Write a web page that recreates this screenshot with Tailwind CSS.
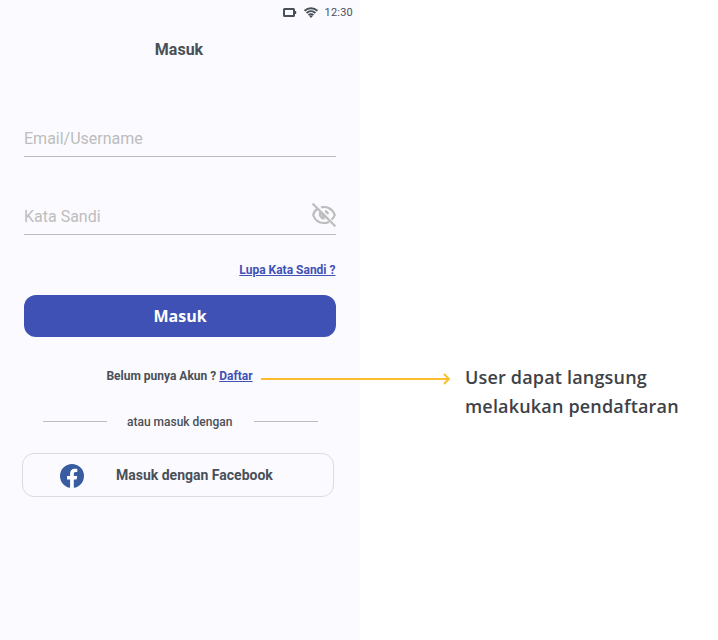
<!DOCTYPE html>
<html lang="id">
<head>
<meta charset="utf-8">
<title>Masuk</title>
<script src="https://cdn.jsdelivr.net/npm/@tailwindcss/browser@4"></script>
</head>
<body class="relative flex h-[640px] w-[718px] overflow-hidden bg-white font-['Roboto',sans-serif] text-[#495057]">
  <main class="flex h-full w-[360px] flex-col bg-[#fbfaff]">
    <div class="flex h-6 items-center justify-end pr-[7px] text-[#495057]">
      <svg class="mr-[7px] h-[9px] w-[14px]" viewBox="0 0 14 9" fill="none"><rect x="1" y="1" width="10" height="7" rx=".5" stroke="currentColor" stroke-width="2"/><path d="M12 3h1.200v3H12z" fill="currentColor"/></svg>
      <svg class="mr-[7px] h-[11px] w-[14px]" viewBox="0 0 14 11" fill="none" stroke="currentColor" stroke-width="1.900"><path d="M.6 3.800a9.200 9.200 0 0 1 12.800 0M2.600 6a6.200 6.200 0 0 1 8.800 0M4.500 8.200a3.500 3.500 0 0 1 5 0"/><path d="M5.200 9.100 7 11l1.800-1.900a2.600 2.600 0 0 0-3.600 0z" fill="currentColor" stroke="none"/></svg>
      <span class="text-[11px] leading-none tracking-[.2px]">12:30</span>
    </div>
    <h1 class="mt-[14px] pr-[2px] text-center text-base leading-6 font-bold">Masuk</h1>
    <form class="flex flex-col px-6">
      <div class="mt-[66px] flex h-[29px] items-start border-b border-[#bdbdbd] text-base leading-[22px] text-[#bdbdbd]">Email/Username</div>
      <div class="mt-[49px] flex h-[29px] items-start justify-between border-b border-[#bdbdbd] text-base leading-[22px] text-[#bdbdbd]">
        <span>Kata Sandi</span>
        <svg class="-mt-[3px] h-[24px] w-[24px] shrink-0" viewBox="0 0 24 24" fill="none" stroke="#bdbdbd" stroke-width="2.200"><path d="M5.400 6C3.300 7.300 1.700 9.400 1.200 12c1.600 4.800 5.800 8 10.800 8 1.800 0 3.400-.4 5-1.100M9 4.400C14.600 2.900 20.600 5.700 22.800 12c-.6 1.900-1.700 3.300-3.300 4.600"/><path d="M8.700 8.700C6.600 11.800 9 16 12.600 15.600M10 10l3.800 3.800-2.800-.8zM13 8.200c1.600.3 2.700 1.400 3 3"/><path d="m.6.6 22.800 22.800"/></svg>
      </div>
      <a class="mt-[27px] mr-[.5px] self-end text-xs leading-4 font-bold text-[#3f51b5] underline">Lupa Kata Sandi ?</a>
      <button type="button" class="mt-[17px] h-[42px] rounded-xl bg-[#3f51b5] font-['Open_Sans',sans-serif] text-base font-bold text-white">Masuk</button>
    </form>
    <p class="mt-[31px] pr-px text-center text-xs leading-4 font-bold">Belum punya Akun ? <a class="text-[#3f51b5] underline">Daftar</a></p>
    <div class="mt-[30px] ml-[43px] flex items-center text-xs leading-4 font-medium">
      <span class="-mt-[2px] h-px w-16 bg-[#bdbdbd]"></span><span class="w-[147px] pl-5">atau masuk dengan</span><span class="-mt-[2px] h-px w-16 bg-[#bdbdbd]"></span>
    </div>
    <button type="button" class="mt-[23px] ml-[22px] flex h-[44px] w-[312px] items-center rounded-xl border border-[#dcdbe0] pl-[37px] text-sm font-bold">
      <svg class="mt-[2px] h-6 w-6" viewBox="0 0 24 24"><circle cx="12" cy="12" r="12" fill="#385c9f"/><path d="M10.100 24v-8.500H7V12h3.100V9.400c0-3 1.800-4.700 4.500-4.700 1.300 0 2.700.2 2.700.2v3h-1.500c-1.500 0-2 .9-2 1.900V12h3.400l-.6 3.500h-2.800V24z" fill="#fff"/></svg>
      <span class="ml-8">Masuk dengan Facebook</span>
    </button>
  </main>
  <aside class="ml-[105px] pt-[363px] font-['Open_Sans',sans-serif] text-lg leading-[29px] font-semibold tracking-[.18px] whitespace-nowrap text-[#3d4248]">User dapat langsung<br>melakukan pendaftaran</aside>
  <svg class="absolute top-[372px] left-[261px] h-[14px] w-[190px]" viewBox="0 0 190 14" fill="none" stroke="#fbbc2d"><path d="M0 7h188" stroke-width="2"/><path d="m183 2 5 5-5 5" stroke-width="1.800"/></svg>
</body>
</html>
